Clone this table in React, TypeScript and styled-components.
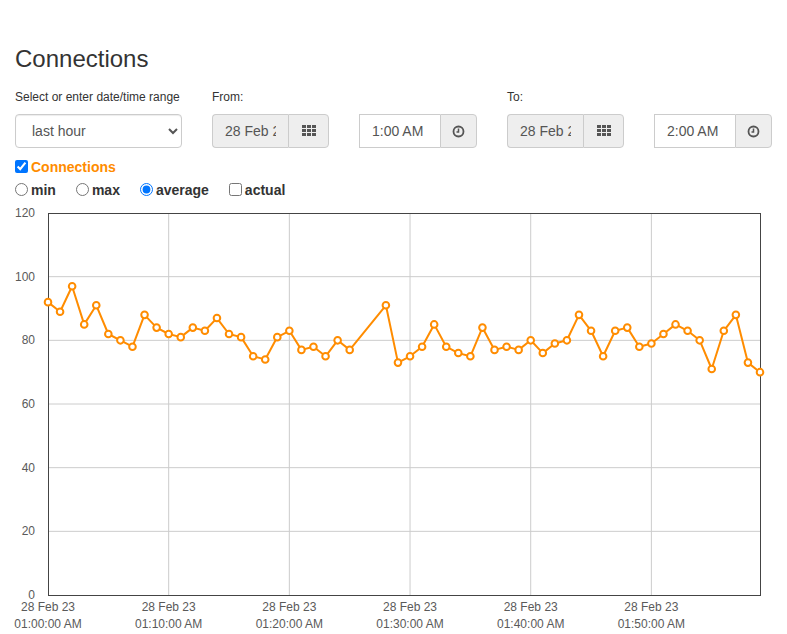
import React from 'react';
import styled, { createGlobalStyle } from 'styled-components';

const GlobalStyle = createGlobalStyle`
  html, body {
    margin: 0;
    padding: 0;
    background: #fff;
    font-family: "Liberation Sans", Arial, Helvetica, sans-serif;
    color: #333;
  }
  * { box-sizing: border-box; }
`;

const Page = styled.div`
  padding: 46px 15px 0;
  width: 787px;
`;

const Title = styled.h2`
  margin: 0 0 17px;
  font-size: 24px;
  font-weight: 400;
  line-height: 26px;
  color: #333;
`;

const Controls = styled.div`
  display: flex;
  gap: 30px;
  align-items: flex-end;
`;

const Field = styled.div<{ $w: number }>`
  width: ${({ $w }) => $w}px;
  display: flex;
  flex-direction: column;
`;

const Label = styled.label`
  font-size: 12px;
  line-height: 17px;
  margin-bottom: 8px;
  color: #333;
`;

const Select = styled.select`
  height: 34px;
  width: 100%;
  border: 1px solid #ccc;
  border-radius: 4px;
  padding: 6px 8px 6px 12px;
  font-size: 14px;
  font-family: inherit;
  color: #555;
  background: #fff;
  box-shadow: inset 0 1px 1px rgba(0, 0, 0, 0.075);
`;

const Group = styled.div`
  display: flex;
  height: 34px;
`;

const TextInput = styled.input<{ $grey?: boolean; $round?: boolean }>`
  flex: 1;
  min-width: 0;
  height: 34px;
  border: 1px solid #ccc;
  border-right: none;
  border-radius: ${({ $round }) => ($round ? '4px 0 0 4px' : '0')};
  padding: 6px 12px;
  font-size: 14px;
  font-family: inherit;
  color: #555;
  background: ${({ $grey }) => ($grey ? '#eee' : '#fff')};
  outline: none;
`;

const Addon = styled.span<{ $w: number }>`
  width: ${({ $w }) => $w}px;
  flex: none;
  display: flex;
  align-items: center;
  justify-content: center;
  background: #eee;
  border: 1px solid #ccc;
  border-radius: 0 4px 4px 0;
  color: #555;
`;

const Options = styled.div`
  margin-top: 7px;
  display: flex;
  flex-direction: column;
`;

const Row = styled.div`
  display: flex;
  align-items: center;
  gap: 20px;
  height: 23px;
  font-size: 14px;
  font-weight: 700;
`;

const Opt = styled.label<{ $color?: string }>`
  display: flex;
  align-items: center;
  color: ${({ $color }) => $color || '#333'};
  input {
    margin: 0 3px 0 0;
    width: 13px;
    height: 13px;
  }
`;

const Chart = styled.svg`
  display: block;
  margin-top: 4px;
  margin-left: -15px;
`;

const ORANGE = '#ff8c00';

const GridIcon = () => (
  <svg width="14" height="12" viewBox="0 0 14 12">
    {[0, 1, 2].map((r) =>
      [0, 1, 2].map((c) => (
        <rect key={`${r}${c}`} x={c * 5} y={r * 4} width="4" height="3" fill="#555" />
      ))
    )}
  </svg>
);

const ClockIcon = () => (
  <svg width="13" height="13" viewBox="0 0 13 13">
    <circle cx="6.5" cy="6.5" r="5" fill="none" stroke="#555" strokeWidth="1.8" />
    <path d="M6.5 3.5V7H4.5" fill="none" stroke="#555" strokeWidth="1.5" />
  </svg>
);

// minute offset, value
const data: [number, number][] = [
  [0, 92], [1, 89], [2, 97], [3, 85], [4, 91], [5, 82], [6, 80], [7, 78], [8, 88], [9, 84],
  [10, 82], [11, 81], [12, 84], [13, 83], [14, 87], [15, 82], [16, 81], [17, 75], [18, 74], [19, 81],
  [20, 83], [21, 77], [22, 78], [23, 75], [24, 80], [25, 77],
  [28, 91], [29, 73], [30, 75], [31, 78], [32, 85], [33, 78], [34, 76], [35, 75], [36, 84], [37, 77],
  [38, 78], [39, 77], [40, 80], [41, 76], [42, 79], [43, 80], [44, 88], [45, 83], [46, 75], [47, 83],
  [48, 84], [49, 78], [50, 79], [51, 82], [52, 85], [53, 83], [54, 80], [55, 71], [56, 83], [57, 88],
  [58, 73], [59, 70],
];

const X0 = 48;
const X1 = 760;
const Y0 = 8;
const Y1 = 390;
const xOf = (m: number) => X0 + ((X1 - X0) * m) / 59;
const yOf = (v: number) => Y1 - ((Y1 - Y0) * v) / 120;

const ConnectionsChart = () => {
  const pts = data.map(([m, v]) => `${xOf(m).toFixed(1)},${yOf(v).toFixed(1)}`).join(' ');
  const ticks = [0, 20, 40, 60, 80, 100, 120];
  const times = ['01:00:00 AM', '01:10:00 AM', '01:20:00 AM', '01:30:00 AM', '01:40:00 AM', '01:50:00 AM'];
  return (
    <Chart width="787" height="429" viewBox="0 0 787 429">
      {ticks.map((t) => (
        <g key={t}>
          {t > 0 && t < 120 && (
            <line x1={X0} x2={X1} y1={yOf(t)} y2={yOf(t)} stroke="#ccc" strokeWidth="1" />
          )}
          <text x="35" y={yOf(t) + 4} textAnchor="end" fontSize="12" fill="#5a5a5a"
            fontFamily="Liberation Sans, Arial, sans-serif">
            {t}
          </text>
        </g>
      ))}
      {times.map((t, i) => {
        const x = xOf(i * 10);
        return (
          <g key={t}>
            {i > 0 && <line x1={x} x2={x} y1={Y0} y2={Y1} stroke="#ccc" strokeWidth="1" />}
            <text x={x} y="406" textAnchor="middle" fontSize="12" fill="#5a5a5a"
              fontFamily="Liberation Sans, Arial, sans-serif">
              28 Feb 23
            </text>
            <text x={x} y="423" textAnchor="middle" fontSize="12" fill="#5a5a5a"
              fontFamily="Liberation Sans, Arial, sans-serif">
              {t}
            </text>
          </g>
        );
      })}
      <rect x={X0 + 0.5} y={Y0 + 0.5} width={X1 - X0} height={Y1 - Y0} fill="none" stroke="#444" strokeWidth="1" />
      <polyline points={pts} fill="none" stroke={ORANGE} strokeWidth="2" strokeLinejoin="round" />
      {data.map(([m, v]) => (
        <circle key={m} cx={xOf(m)} cy={yOf(v)} r="3.3" fill="#fff" stroke={ORANGE} strokeWidth="2" />
      ))}
    </Chart>
  );
};

export default function App() {
  return (
    <Page>
      <GlobalStyle />
      <Title>Connections</Title>
      <Controls>
        <Field $w={167}>
          <Label>Select or enter date/time range</Label>
          <Select defaultValue="hour">
            <option value="hour">last hour</option>
            <option value="day">last day</option>
            <option value="week">last week</option>
          </Select>
        </Field>
        <Field $w={117}>
          <Label>From:</Label>
          <Group>
            <TextInput $grey $round readOnly value="28 Feb 2023" />
            <Addon $w={41}><GridIcon /></Addon>
          </Group>
        </Field>
        <Field $w={118}>
          <Group>
            <TextInput readOnly value="1:00 AM" />
            <Addon $w={37}><ClockIcon /></Addon>
          </Group>
        </Field>
        <Field $w={117}>
          <Label>To:</Label>
          <Group>
            <TextInput $grey $round readOnly value="28 Feb 2023" />
            <Addon $w={41}><GridIcon /></Addon>
          </Group>
        </Field>
        <Field $w={118}>
          <Group>
            <TextInput readOnly value="2:00 AM" />
            <Addon $w={37}><ClockIcon /></Addon>
          </Group>
        </Field>
      </Controls>
      <Options>
        <Row>
          <Opt $color={ORANGE}>
            <input type="checkbox" defaultChecked />
            Connections
          </Opt>
        </Row>
        <Row>
          <Opt><input type="radio" name="agg" />min</Opt>
          <Opt><input type="radio" name="agg" />max</Opt>
          <Opt><input type="radio" name="agg" defaultChecked />average</Opt>
          <Opt><input type="checkbox" />actual</Opt>
        </Row>
      </Options>
      <ConnectionsChart />
    </Page>
  );
}
